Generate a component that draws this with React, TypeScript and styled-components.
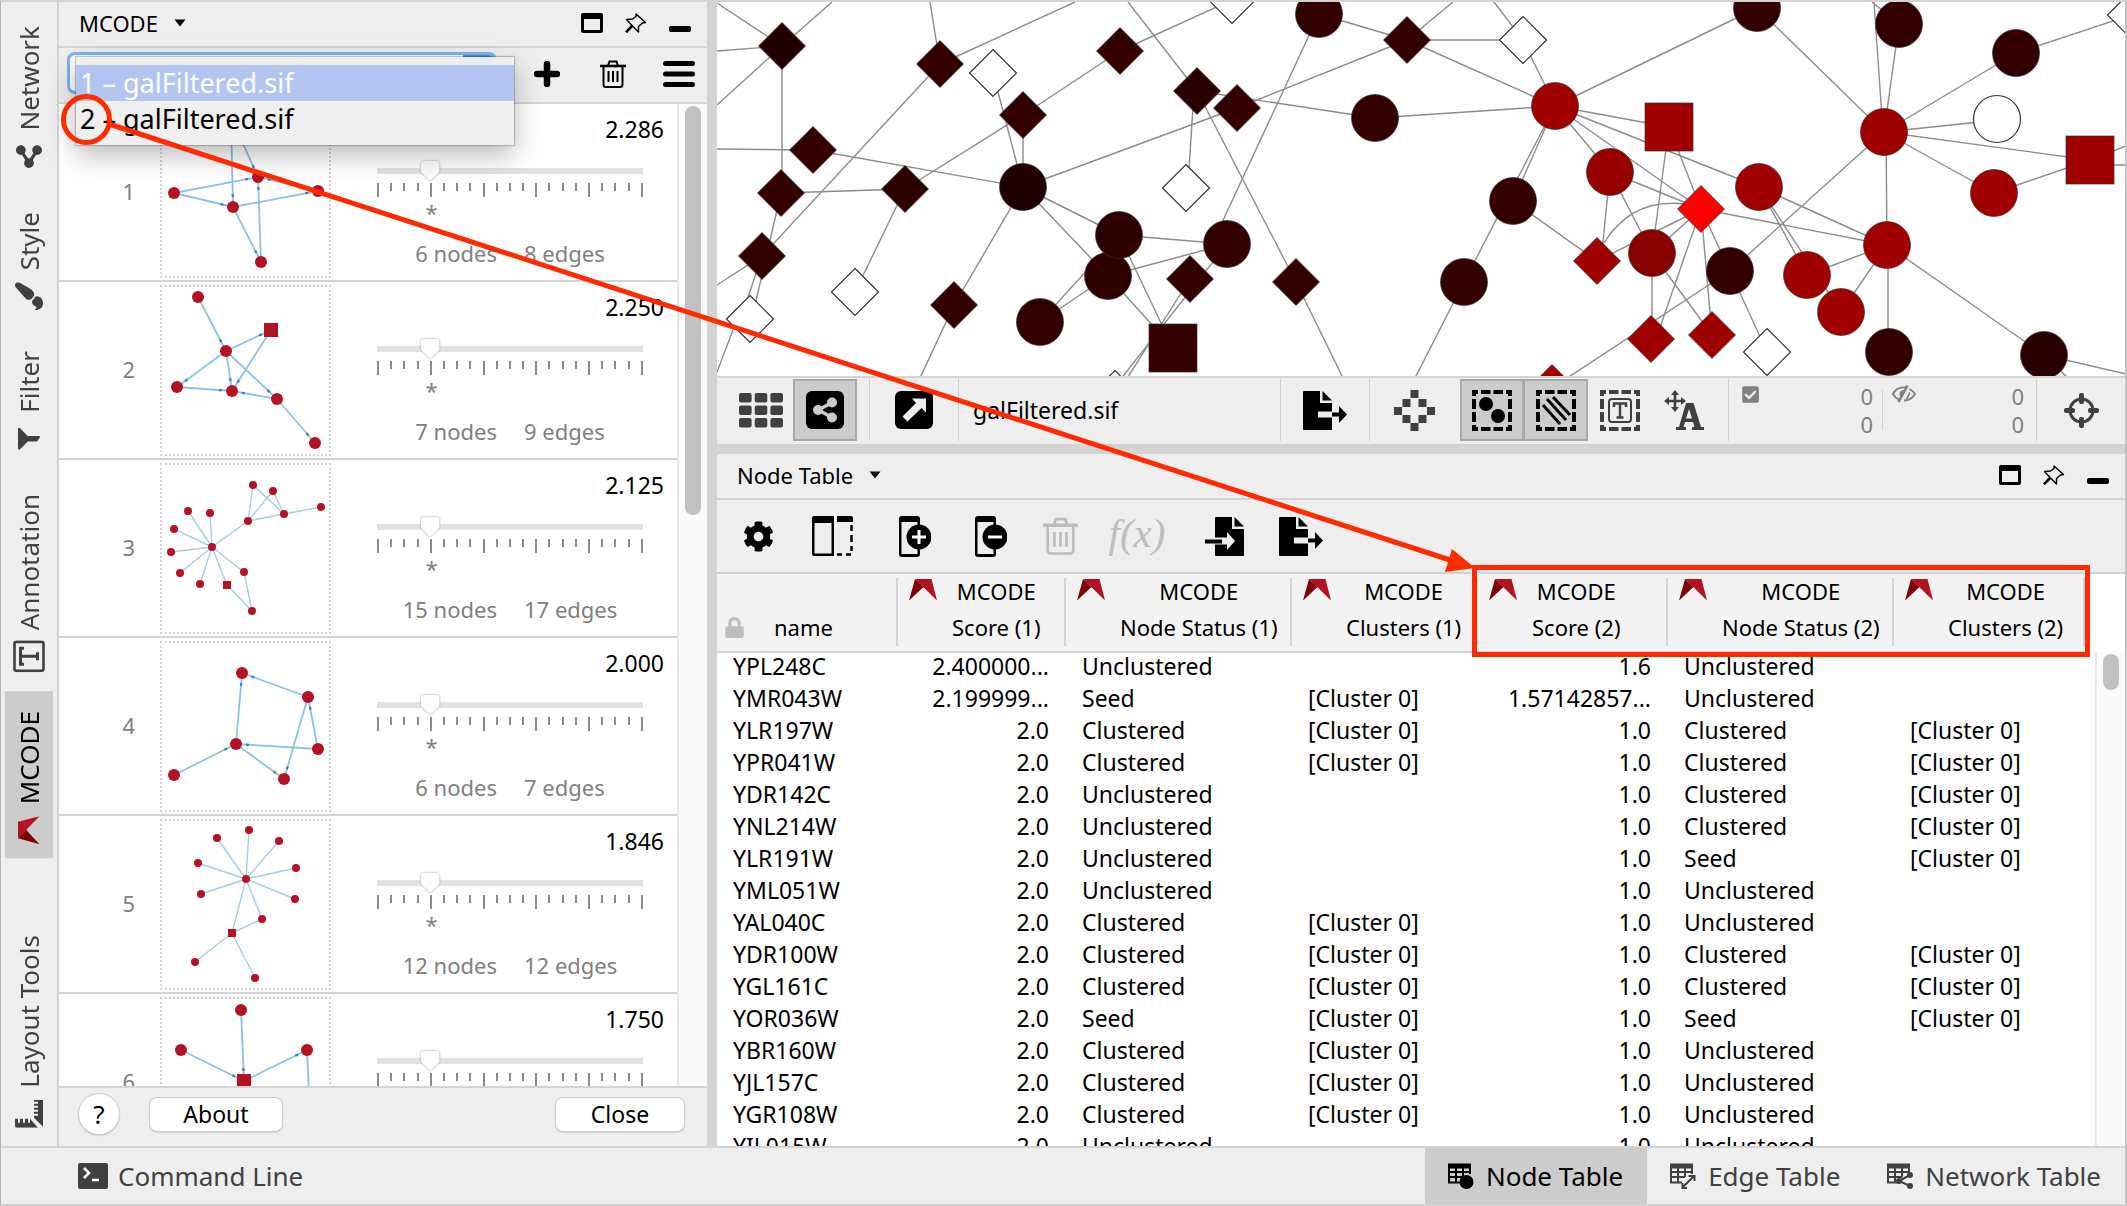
import React, { useState } from "react";
import styled, { createGlobalStyle, css } from "styled-components";
import { FaFilter, FaPaintBrush, FaCog, FaLock, FaCheckSquare, FaShareAlt } from "react-icons/fa";

const color = {
  panel: "#eeeeee",
  line: "#d3d3d3",
  pressed: "#cccccc",
  pressedLine: "#a9a9a9",
  dim: "#808080",
  icon: "#404040",
  crimson: "#b31225",
  darkCrimson: "#7d0006",
  marker: "#ff2a00",
};

const GlobalStyle = createGlobalStyle`
  * { box-sizing: border-box; }
  body {
    margin: 0;
    background: ${color.panel};
    font-family: "Noto Sans", "Open Sans", sans-serif;
    font-size: 22px;
    color: #000;
  }
  button, select, input { font: inherit; color: inherit; margin: 0; }
  svg { display: block; flex: none; }
`;

/* ---------- frame ---------- */

const Window = styled.div`
  position: relative;
  display: flex;
  flex-direction: column;
  height: 100vh;
  overflow: hidden;
  border: solid ${color.line};
  border-width: 2px 2px 2px 1px;
  border-left-color: #b4b4b4;
  border-right-color: #c4c4c4;
`;

const Workspace = styled.div`
  flex: 1;
  min-height: 0;
  display: flex;
`;

const Rail = styled.nav`
  flex: none;
  width: 58px;
  display: flex;
  flex-direction: column;
  align-items: flex-start;
  gap: 7px;
  padding: 4px 0 4px 4px;
  border-right: 2px solid ${color.line};
`;

const RailTab = styled.button<{ $active?: boolean; $last?: boolean }>`
  display: flex;
  align-items: center;
  gap: 10px;
  width: 48px;
  padding-block: 0;
  padding-inline: 12px 20px;
  border: 0;
  writing-mode: vertical-rl;
  transform: rotate(180deg);
  background: ${(p) => (p.$active ? color.pressed : "transparent")};
  color: ${(p) => (p.$active ? "#000" : color.icon)};
  font-size: 26px;
  line-height: 48px;
  margin-top: ${(p) => (p.$last ? "auto" : "0")};
`;

const RailIcon = styled.span`
  display: flex;
  align-items: center;
  justify-content: center;
  width: 32px;
  height: 32px;
  transform: rotate(90deg);
  line-height: 1;
`;

const SidePanel = styled.section`
  flex: none;
  width: 648px;
  display: flex;
  flex-direction: column;
`;

const Gutter = styled.div<{ $horizontal?: boolean }>`
  flex: none;
  background: ${color.line};
  ${(p) =>
    p.$horizontal
      ? css`
          height: 10px;
        `
      : css`
          width: 10px;
        `}
`;

const Main = styled.main`
  flex: 1;
  min-width: 0;
  display: flex;
  flex-direction: column;
`;

const TitleBar = styled.header`
  flex: none;
  display: flex;
  align-items: center;
  gap: 22px;
  height: 46px;
  padding: 0 16px 2px 20px;
  border-bottom: 2px solid ${color.line};
`;

const TitleButton = styled.button`
  display: flex;
  align-items: center;
  gap: 16px;
  margin-right: auto;
  padding: 0;
  border: 0;
  background: none;
  line-height: 32px;
`;

const GlyphButton = styled.button`
  display: flex;
  align-items: center;
  justify-content: center;
  width: 22px;
  height: 32px;
  padding: 0;
  border: 0;
  background: none;
`;

/* ---------- MCODE panel ---------- */

const SetBar = styled.div`
  position: relative;
  z-index: 2;
  flex: none;
  display: flex;
  align-items: center;
  gap: 34px;
  height: 56px;
  padding: 0 12px 2px 8px;
  border-bottom: 2px solid ${color.line};
`;

const Combo = styled.label`
  flex: 1;
  display: flex;
  height: 42px;
  margin-bottom: 2px;
  border: 3px solid #7fb2ec;
  border-radius: 8px;
  background: #fff;
  overflow: hidden;
`;

const ComboSelect = styled.select`
  flex: 1;
  appearance: none;
  border: 0;
  padding: 0 0 0 16px;
  background: transparent;
  font-size: 27px;
  outline: none;
`;

const ComboCap = styled.span`
  display: flex;
  align-items: center;
  justify-content: center;
  width: 34px;
  margin: -3px;
  background: #4f8fe9;
`;

const Popup = styled.ul`
  position: absolute;
  left: 17px;
  top: 9px;
  width: 438px;
  margin: 0;
  padding: 8px 0;
  list-style: none;
  background: rgba(238, 238, 238, 0.97);
  box-shadow: 0 0 1px 1px rgba(0, 0, 0, 0.2), 0 10px 26px rgba(0, 0, 0, 0.28);
`;

const PopupItem = styled.li<{ $selected?: boolean }>`
  padding-left: 4px;
  font-size: 27px;
  line-height: 36px;
  background: ${(p) => (p.$selected ? "rgba(178, 194, 241, 0.97)" : "transparent")};
  color: ${(p) => (p.$selected ? "#fff" : "#000")};
`;

const SetButton = styled(GlyphButton)`
  width: 32px;
`;

const ListArea = styled.div`
  flex: 1;
  min-height: 0;
  display: flex;
  background: #fff;
  border-bottom: 2px solid ${color.line};
`;

const ClusterList = styled.ol`
  flex: 1;
  margin: 0;
  padding: 0;
  overflow: hidden;
  list-style: none;
`;

const ScrollTrack = styled.div<{ $inset: number }>`
  flex: none;
  width: 30px;
  padding: ${(p) => p.$inset}px 0 0 6px;
  background: #fafafa;
  border-left: 2px solid #e8e8e8;
`;

const ScrollThumb = styled.div<{ $length: string }>`
  width: 16px;
  height: ${(p) => p.$length};
  border-radius: 8px;
  background: #c1c1c1;
`;

const ClusterRow = styled.li`
  display: grid;
  grid-template-columns: 101px 171px 1fr;
  height: 178px;
  border-bottom: 2px solid ${color.line};
`;

const Rank = styled.span`
  padding-right: 25px;
  text-align: right;
  line-height: 174px;
  color: ${color.dim};
`;

const Thumb = styled.div`
  width: 171px;
  height: 171px;
  margin-top: 3px;
  border: 2px dotted #d4d4d4;
`;

const Detail = styled.div`
  display: flex;
  flex-direction: column;
  padding: 9px 34px 0 46px;
`;

const Score = styled.div`
  margin-right: -21px;
  text-align: right;
  font-size: 23px;
  line-height: 32px;
`;

const SliderTrack = styled.div`
  display: flex;
  height: 20px;
  margin-top: 16px;
  background: linear-gradient(#e2e2e2, #e2e2e2) 0 7px / 100% 6px no-repeat;
`;

const Slider = styled.input`
  appearance: none;
  flex: 1;
  height: 20px;
  margin: 0 -10px;
  background: transparent;
  filter: drop-shadow(0 0 1px #999);
  &::-webkit-slider-thumb {
    appearance: none;
    width: 20px;
    height: 20px;
    background: #fdfdfd;
    clip-path: polygon(12% 0, 88% 0, 96% 8%, 96% 55%, 52% 98%, 48% 98%, 4% 55%, 4% 8%);
  }
`;

const Ticks = styled.div`
  display: flex;
  justify-content: space-between;
  height: 14px;
  margin-top: 2px;
`;

const Tick = styled.i<{ $major: boolean }>`
  width: 2px;
  height: ${(p) => (p.$major ? 14 : 8)}px;
  background: #8a8a8a;
`;

const DefaultMark = styled.div`
  width: 41%;
  margin-top: 3px;
  text-align: center;
  line-height: 24px;
  color: ${color.dim};
`;

const Counts = styled.div`
  display: flex;
  justify-content: center;
  gap: 27px;
  margin-top: 14px;
  line-height: 30px;
  color: ${color.dim};
`;

const PanelFooter = styled.footer`
  flex: none;
  display: flex;
  align-items: center;
  height: 58px;
  padding: 0 23px 6px 20px;
`;

const raised = css`
  border: 0;
  background: #fff;
  box-shadow: 0 0 0 1px #cdcdcd, 0 1px 2px rgba(0, 0, 0, 0.4);
`;

const HelpButton = styled.button`
  ${raised}
  width: 40px;
  height: 40px;
  margin-right: 31px;
  padding: 0;
  border-radius: 50%;
  font-size: 26px;
  line-height: 40px;
`;

const PushButton = styled.button<{ $end?: boolean }>`
  ${raised}
  width: ${(p) => (p.$end ? 128 : 132)}px;
  height: 33px;
  margin-left: ${(p) => (p.$end ? "auto" : "0")};
  padding: 0;
  border-radius: 7px;
  font-size: 23px;
  line-height: 32px;
`;

/* ---------- network view ---------- */

const Canvas = styled.div`
  flex: none;
  height: 376px;
  background: #fff;
  border-bottom: 2px solid ${color.line};
  overflow: hidden;
`;

const ViewBar = styled.div`
  flex: none;
  display: flex;
  align-items: center;
  height: 66px;
  padding: 0 12px 2px 12px;
`;

const ToolButton = styled.button<{ $active?: boolean; $joined?: boolean; $spaced?: boolean }>`
  display: flex;
  align-items: center;
  justify-content: center;
  flex: none;
  width: 64px;
  height: 62px;
  padding: 0;
  margin-left: ${(p) => (p.$spaced ? "14px" : "0")};
  border: 2px solid ${(p) => (p.$active ? color.pressedLine : "transparent")};
  border-left-width: ${(p) => (p.$joined ? 1 : 2)}px;
  background: ${(p) => (p.$active ? color.pressed : "transparent")};
`;

const Separator = styled.span`
  flex: none;
  width: 1px;
  height: 62px;
  margin: 0 12px;
  background: #cfcfcf;
`;

const ViewName = styled.span`
  flex: 1;
  padding-left: 2px;
  font-size: 23px;
`;

const Tally = styled.div`
  display: flex;
  justify-content: space-between;
  width: 132px;
  color: ${color.dim};
  line-height: 28px;
  svg {
    margin-top: 3px;
  }
`;

const TallyNumbers = styled.div`
  display: flex;
  flex-direction: column;
`;

const TallyRule = styled.span`
  width: 1px;
  height: 40px;
  margin: 0 9px;
  background: #cfcfcf;
`;

/* ---------- node table ---------- */

const TableBar = styled.div`
  flex: none;
  display: flex;
  align-items: center;
  height: 74px;
  padding-left: 8px;
  border-bottom: 2px solid ${color.line};
`;

const TableTool = styled.button<{ $width: number }>`
  display: flex;
  align-items: center;
  justify-content: center;
  width: ${(p) => p.$width}px;
  height: 60px;
  padding: 0;
  border: 0;
  background: none;
`;

const Formula = styled.span`
  padding-bottom: 6px;
  font-family: "Liberation Serif", serif;
  font-style: italic;
  font-size: 41px;
  line-height: 44px;
  color: #bdbdbd;
`;

const TableArea = styled.div`
  flex: 1;
  min-height: 0;
  display: flex;
  background: #fff;
`;

const TableClip = styled.div`
  flex: 1;
  overflow: hidden;
`;

const ScrollColumn = styled.div`
  display: flex;
  padding-top: 78px;
`;

const Grid = styled.table`
  table-layout: fixed;
  width: 1368px;
  border-collapse: collapse;
`;

const HeadCell = styled.th`
  height: 78px;
  padding: 0;
  border-bottom: 2px solid ${color.line};
  background: linear-gradient(${color.line}, ${color.line}) right 0 top 4px / 2px 68px no-repeat #f3f3f3;
  text-align: left;
  vertical-align: top;
  font-weight: 400;
  line-height: 36px;
`;

const HeadInner = styled.div<{ $locked?: boolean }>`
  display: flex;
  align-items: ${(p) => (p.$locked ? "flex-end" : "flex-start")};
  gap: ${(p) => (p.$locked ? 29 : 15)}px;
  height: 71px;
  padding-left: ${(p) => (p.$locked ? 7 : 11)}px;
  color: ${(p) => (p.$locked ? "#bdbdbd" : "inherit")};
  white-space: nowrap;
  svg {
    margin: ${(p) => (p.$locked ? "0 0 7px" : "5px 0 0")};
  }
`;

const HeadText = styled.span`
  margin-top: -1px;
  color: #000;
  text-align: center;
  white-space: pre-line;
`;

const Cell = styled.td<{ $number?: boolean }>`
  height: 32px;
  padding: 0 17px 6px 16px;
  white-space: nowrap;
  font-size: 23px;
  line-height: 26px;
  text-align: ${(p) => (p.$number ? "right" : "left")};
`;

/* ---------- bottom bar ---------- */

const BottomBar = styled.footer`
  flex: none;
  display: flex;
  height: 58px;
  border-top: 2px solid ${color.line};
`;

const BottomTab = styled.button<{ $active?: boolean; $first?: boolean }>`
  display: flex;
  align-items: center;
  gap: ${(p) => (p.$first ? 10 : 12)}px;
  margin-left: ${(p) => (p.$first ? "54px" : "0")};
  margin-right: ${(p) => (p.$first ? "auto" : "0")};
  padding: 0 24px 0 23px;
  border: 0;
  background: ${(p) => (p.$active ? color.pressed : "transparent")};
  color: ${(p) => (p.$active ? "#000" : color.icon)};
  font-size: 26px;
  line-height: 36px;
`;

const Callout = styled.svg`
  position: absolute;
  left: -1px;
  top: -2px;
  z-index: 3;
  pointer-events: none;
`;

/* ---------- icons ---------- */

const McodeLogo = () => (
  <svg width="28" height="22" viewBox="0 0 28 22">
    <path d="M6 0L14.500 8L0 21.500Z" fill={color.darkCrimson} />
    <path d="M6 0H22.500L28 21.500Z" fill={color.crimson} />
  </svg>
);

const CaretIcon = () => (
  <svg width="12" height="8" viewBox="0 0 12 8">
    <path d="M0.500 0.500H11.500L6 7.500Z" />
  </svg>
);

const FloatIcon = () => (
  <svg width="22" height="20" viewBox="0 0 22 20">
    <path fillRule="evenodd" d="M2 0H20Q22 0 22 2V18Q22 20 20 20H2Q0 20 0 18V2Q0 0 2 0ZM3 6V17H19V6Z" />
  </svg>
);

const PinIcon = () => (
  <svg width="22" height="20" viewBox="0 0 22 20" fill="none" stroke="#000">
    <path d="M11 1L20.500 9.500L17.500 10L13.500 13.500V19L7.500 13L1.500 6.500L7.500 6L11 3.500Z" strokeWidth="1.400" strokeLinejoin="round" />
    <path d="M7 13L1 19.300" strokeWidth="2.600" />
  </svg>
);

const MinimizeIcon = () => (
  <svg width="22" height="20" viewBox="0 0 22 20">
    <rect y="13" width="22" height="6" rx="2" />
  </svg>
);

const TrashIcon = ({ width, height, stroke = "#000" }: { width: number; height: number; stroke?: string }) => (
  <svg width={width} height={height} viewBox="0 0 26 28" fill="none" stroke={stroke} strokeWidth="2">
    <path d="M0 6H26" strokeWidth="2.600" />
    <path d="M8 6L9.500 1.500H16.500L18 6M3.500 6V24.500Q3.500 27 6 27H20Q22.500 27 22.500 24.500V6M8.500 11V22M13 11V22M17.500 11V22" />
  </svg>
);

const HiddenIcon = () => (
  <svg width="24" height="18" viewBox="0 0 24 18" fill="none" stroke={color.dim} strokeWidth="1.800">
    <path d="M14 2.500Q4.500 1.500 1 9Q3 13 7 14.700M17.500 4Q21 6 23 9Q19 15.500 12 15.500" />
    <path d="M13 5Q8 4.500 7.500 9Q7.500 11 9 12Z" fill={color.dim} stroke="none" />
    <path d="M15.500 0.500L6.500 17" strokeWidth="2.600" />
    <path d="M18 7.500L14.500 14" strokeWidth="1.600" />
  </svg>
);

const GridIcon = () => (
  <svg width="44" height="35" viewBox="0 0 44 35" fill={color.icon}>
    {[0, 12.5, 25].map((y) =>
      [0, 15.7, 31.4].map((x) => <rect key={`${x}-${y}`} x={x} y={y} width="12.600" height="9.500" rx="2" />)
    )}
  </svg>
);

const ShareSquareIcon = () => (
  <svg width="38" height="38" viewBox="0 0 38 38">
    <rect width="38" height="38" rx="6" />
    <g fill="#ccc" stroke="none">
      <path d="M26 11.500L12.500 19L26 26.500" fill="none" stroke="#ccc" strokeWidth="3.500" />
      <circle cx="26" cy="11.500" r="5" />
      <circle cx="12" cy="19" r="5" />
      <circle cx="26" cy="26.500" r="5" />
    </g>
  </svg>
);

const DetachIcon = () => (
  <svg width="38" height="38" viewBox="0 0 38 38">
    <rect width="38" height="38" rx="6" />
    <path d="M17 7.500H31V21.500L26.500 17L12.500 30.500L7.500 25.500L21 12Z" fill="#eee" />
  </svg>
);

const PageExportIcon = () => (
  <svg width="44" height="39" viewBox="0 0 44 39">
    <path d="M0 1Q0 0 1 0H17V12H29V39H1Q0 39 0 38Z" />
    <path d="M19.500 0L29 9.500H19.500Z" />
    <path d="M15 20.500H29V26.500H15Z" fill="#eee" />
    <path d="M29 21.500H36V15L44 23.500L36 32V25.500H29Z" />
  </svg>
);

const PageImportIcon = () => (
  <svg width="39" height="39" viewBox="0 0 39 39">
    <path d="M10 1Q10 0 11 0H27V12H39V39H11Q10 39 10 38Z" />
    <path d="M29.500 0L39 9.500H29.500Z" />
    <path d="M9 20.500H22V15L30 24L22 33V27.500H9Z" fill="#eee" />
    <path d="M0 22.500H17V26.500H0Z" />
  </svg>
);

const FirstNeighborsIcon = () => (
  <svg width="41" height="41" viewBox="0 0 41 41" fill={color.icon}>
    {[
      [16.5, 0], [8.5, 9], [24.5, 9], [0, 17], [33, 17], [8.5, 25], [24.5, 25], [16.5, 33],
    ].map(([x, y]) => (
      <rect key={`${x}-${y}`} x={x} y={y} width="8" height="8" />
    ))}
  </svg>
);

const DashFrame = ({ stroke }: { stroke: string }) => (
  <g fill="none" stroke={stroke} strokeWidth="4">
    <path d="M0 2H6M9 2H18.500M21.500 2H31M34 2H40M0 39H6M9 39H18.500M21.500 39H31M34 39H40" />
    <path d="M2 0V6M2 9V19M2 22V32M2 35V41M38 0V6M38 9V19M38 22V32M38 35V41" />
  </g>
);

const NodeSelectIcon = () => (
  <svg width="40" height="41" viewBox="0 0 40 41">
    <DashFrame stroke="#000" />
    <circle cx="14" cy="14" r="7" />
    <circle cx="26" cy="26" r="7" />
  </svg>
);

const EdgeSelectIcon = () => (
  <svg width="40" height="41" viewBox="0 0 40 41">
    <DashFrame stroke="#000" />
    <path d="M17 7L34 25M11 9L30 30M7 15L24 34" stroke="#000" strokeWidth="3" />
  </svg>
);

const LabelSelectIcon = () => (
  <svg width="40" height="41" viewBox="0 0 40 41">
    <DashFrame stroke={color.icon} />
    <rect x="9" y="9" width="22" height="23" rx="3" fill="none" stroke={color.icon} strokeWidth="2" />
    <path d="M14 17V13.500H26V17M20 13.500V27M16.500 27.500H23.500" fill="none" stroke={color.icon} strokeWidth="2.500" />
  </svg>
);

const MoveLabelIcon = () => (
  <svg width="40" height="41" viewBox="0 0 40 41" fill={color.icon}>
    <path d="M11 0L15 5H12.300V9.700H17V7L22 11L17 15V12.300H12.300V17H15L11 22L7 17H9.700V12.300H5V15L0 11L5 7V9.700H9.700V5H7Z" />
    <path d="M22 13H29.500L37 37H40V40H28V37H30.500L29 32H21L19.500 37H22V40H12V37H15ZM25 19L22 28.500H28Z" fillRule="evenodd" />
  </svg>
);

const LocateIcon = () => (
  <svg width="35" height="35" viewBox="0 0 35 35" fill={color.icon}>
    <circle cx="17.500" cy="17.500" r="11.500" fill="none" stroke={color.icon} strokeWidth="3" />
    <rect x="15" width="5" height="11" rx="2" />
    <rect x="15" y="24" width="5" height="11" rx="2" />
    <rect y="15" width="11" height="5" rx="2" />
    <rect x="24" y="15" width="11" height="5" rx="2" />
  </svg>
);

const ColumnsIcon = () => (
  <svg width="41" height="40" viewBox="0 0 41 40">
    <path fillRule="evenodd" d="M2 0H22V40H2Q0 40 0 38V2Q0 0 2 0ZM2.500 7V37.500H19.500V7Z" />
    <path d="M25 0H39Q41 0 41 2V6H25Z" />
    <path d="M39.500 9V15M39.500 19V26M39.500 30V35M25 38.500H30M34 38.500H39" stroke="#000" strokeWidth="2.500" />
  </svg>
);

const ColumnEditIcon = ({ add }: { add?: boolean }) => (
  <svg width="32" height="41" viewBox="0 0 32 41">
    <path fillRule="evenodd" d="M3 0H18Q21 0 21 3V38Q21 41 18 41H3Q0 41 0 38V3Q0 0 3 0ZM2.500 6V38H18.500V6Z" />
    <circle cx="20" cy="21" r="12.500" />
    <path d={add ? "M13 21H27M20 14V28" : "M13 21H27"} stroke="#fff" strokeWidth="3" />
  </svg>
);

const TextBoxIcon = () => (
  <svg width="32" height="32" viewBox="0 0 32 32" fill="none" stroke={color.icon}>
    <rect x="1.500" y="1.500" width="29" height="29" rx="2" strokeWidth="2.600" />
    <path d="M8 11V7.500H24V11M16 7.500V24M12 24.500H20" strokeWidth="3" />
  </svg>
);

const RulerIcon = () => (
  <svg width="28" height="28" viewBox="0 0 28 28" fill={color.icon}>
    <path d="M2 0H9V3H5V5H9V8H5V10H9V13H5V15H9L0 23V2Q0 0 2 0Z" />
    <path d="M10 19H12V23H14V19H16V23H18V19H20V23H22V19H24V23H26V19H28V28H1Z" />
  </svg>
);

const TerminalIcon = () => (
  <svg width="30" height="26" viewBox="0 0 30 26">
    <rect width="30" height="26" rx="2" fill={color.icon} />
    <path d="M6 5L11 10L6 15M14 17H21" fill="none" stroke="#fff" strokeWidth="2.500" />
  </svg>
);

const TableIcon = ({ kind }: { kind: "node" | "edge" | "network" }) => {
  const ink = kind === "node" ? "#000" : color.icon;
  return (
    <svg width="26" height="26" viewBox="0 0 26 26" fill="none" stroke={ink} strokeWidth="2">
      <path d="M0 3H23" strokeWidth="5" />
      <path d="M1 4V19.500H12M22 4V11M0 9H23M0 14H15M8 4V19M15 4V14" />
      {kind === "node" && <circle cx="18.500" cy="19" r="7" fill={ink} stroke="none" />}
      {kind === "edge" && <path d="M13 24L24 13M18.500 13H24.500V18M12.500 20V25H17" />}
      {kind === "network" && (
        <g fill={ink}>
          <path d="M23 12L12 18L23 23" fill="none" />
          <circle cx="23" cy="12" r="2" />
          <circle cx="12" cy="18" r="2" />
          <circle cx="23" cy="23" r="2" />
        </g>
      )}
    </svg>
  );
};

/* ---------- main network drawing ---------- */

type Shape = "c" | "d" | "s";
const DARK = "#330000";
const RED = "#a00000";
const WHITE = "#ffffff";

const networkNodes: [Shape, number, number, string][] = [
  ["d", 782, 46, "#220000"], ["d", 940, 64, DARK], ["d", 993, 73, WHITE], ["d", 1120, 51, DARK],
  ["d", 1197, 91, "#280000"], ["d", 1023, 115, DARK], ["d", 813, 150, DARK], ["d", 781, 193, DARK],
  ["d", 905, 189, "#2d0000"], ["c", 1023, 187, "#1e0000"], ["d", 1186, 188, WHITE],
  ["c", 1108, 276, "#2d0000"], ["c", 1119, 235, "#2d0000"], ["d", 762, 256, DARK],
  ["d", 855, 292, WHITE], ["d", 750, 319, WHITE], ["d", 954, 305, DARK], ["c", 1040, 322, DARK],
  ["s", 1173, 348, DARK], ["d", 1190, 279, DARK], ["d", 1115, 394, WHITE], ["d", 1232, 0, WHITE],
  ["c", 1319, 14, DARK], ["d", 1407, 40, DARK], ["d", 1523, 40, WHITE], ["d", 1237, 108, DARK],
  ["c", 1375, 118, DARK], ["c", 1555, 106, RED], ["s", 1669, 127, RED], ["c", 1610, 172, "#960000"],
  ["c", 1227, 244, DARK], ["d", 1296, 282, DARK], ["c", 1513, 201, DARK], ["c", 1464, 282, DARK],
  ["d", 1597, 261, RED], ["c", 1652, 253, "#880000"], ["d", 1651, 339, RED], ["d", 1552, 388, RED],
  ["c", 1757, 8, DARK], ["c", 1899, 24, DARK], ["c", 2016, 53, DARK], ["d", 2131, 15, WHITE],
  ["c", 1884, 132, RED], ["c", 1997, 119, WHITE], ["s", 2090, 160, RED], ["c", 1994, 193, RED],
  ["c", 1759, 187, RED], ["d", 1701, 209, "#ff0000"], ["c", 1887, 245, RED], ["c", 1730, 271, DARK],
  ["c", 1807, 275, RED], ["c", 1841, 312, RED], ["d", 1712, 335, RED], ["d", 1767, 352, WHITE],
  ["c", 1889, 352, DARK], ["c", 2044, 355, "#280000"],
];

const networkEdges: [number, number, number, number][] = [
  [717, 3, 782, 46], [782, 46, 832, 2], [717, 51, 782, 46], [717, 105, 782, 46], [782, 46, 782, 193],
  [717, 149, 813, 150], [813, 150, 1023, 187], [781, 193, 905, 189], [781, 193, 755, 305],
  [762, 256, 747, 300], [762, 256, 940, 64], [717, 285, 762, 256], [733, 330, 717, 372],
  [940, 64, 930, 2], [940, 64, 1075, 2], [993, 73, 1023, 187], [1120, 51, 1023, 115],
  [1120, 51, 1232, 0], [1023, 115, 905, 189], [1023, 115, 1023, 187], [1023, 187, 1237, 108],
  [1023, 187, 1119, 235], [1023, 187, 1108, 276], [1023, 187, 954, 305], [954, 305, 920, 378],
  [905, 189, 855, 292], [1197, 91, 1128, 2], [1194, 91, 1189, 170], [1197, 91, 1296, 282],
  [1119, 235, 1227, 244], [1108, 276, 1227, 244], [1119, 235, 1040, 322], [1108, 276, 1040, 322],
  [1119, 235, 1173, 348], [1108, 276, 1173, 348], [1227, 244, 1120, 380], [1190, 279, 1126, 380],
  [1319, 14, 1407, 40], [1407, 40, 1555, 106], [1319, 14, 1212, 244], [1407, 40, 1453, 2],
  [1407, 40, 1523, 40], [1407, 40, 1237, 108], [1197, 91, 1375, 118], [1375, 118, 1555, 106],
  [1523, 40, 1494, 2], [1523, 40, 1555, 106], [1555, 106, 1757, 8], [1555, 106, 1669, 127],
  [1555, 106, 1759, 187], [1555, 106, 1701, 209], [1555, 106, 1610, 172], [1610, 172, 1701, 209],
  [1555, 106, 1513, 201], [1555, 106, 1464, 282], [1513, 201, 1597, 261], [1464, 282, 1414, 380],
  [1296, 282, 1343, 378], [1610, 172, 1601, 261], [1610, 172, 1652, 253], [1669, 127, 1652, 253],
  [1669, 127, 1701, 209], [1597, 261, 1701, 209], [1652, 253, 1701, 209], [1652, 253, 1652, 339],
  [1652, 253, 1712, 335], [1701, 209, 1656, 339], [1701, 209, 1712, 335], [1701, 209, 1730, 271],
  [1701, 209, 1887, 245], [1730, 271, 1552, 388], [1730, 271, 1884, 132], [1730, 271, 1767, 352],
  [1757, 8, 1884, 132], [1884, 132, 1899, 24], [1883, 132, 1874, 2], [1899, 24, 1872, 2],
  [1884, 132, 2016, 53], [1884, 132, 1980, 122], [1884, 132, 2090, 160], [1884, 132, 1994, 193],
  [1886, 132, 1887, 245], [2016, 53, 2131, 15], [1994, 193, 2090, 160], [2090, 160, 2126, 146],
  [2090, 165, 2126, 165], [1759, 187, 1887, 245], [1759, 187, 1807, 275], [1759, 187, 1841, 312],
  [1887, 245, 1807, 275], [1887, 245, 1841, 312], [1888, 245, 1888, 352], [1887, 245, 2044, 355],
  [2044, 355, 2126, 374], [2044, 355, 2068, 378],
];

const NetworkView = () => (
  <svg width="100%" height="374" viewBox="717 2 1408 374" preserveAspectRatio="xMidYMid slice">
    <g stroke="#8c8c8c" strokeWidth="1.400" fill="none">
      {networkEdges.map(([x1, y1, x2, y2], i) => (
        <line key={i} x1={x1} y1={y1} x2={x2} y2={y2} />
      ))}
      <path d="M1604 243Q1632 198 1684 204" />
    </g>
    {networkNodes.map(([shape, x, y, fill], i) => {
      const paint = { fill, stroke: "#333", strokeWidth: fill === WHITE ? 1.2 : 0.7 };
      if (shape === "c") return <circle key={i} cx={x} cy={y} r="23.500" {...paint} />;
      if (shape === "s") return <rect key={i} x={x - 24} y={y - 24} width="48" height="48" {...paint} />;
      return <path key={i} d={`M${x} ${y - 23.5}l23.500 23.500l-23.500 23.500l-23.500 -23.500z`} {...paint} />;
    })}
  </svg>
);

/* ---------- clusters ---------- */

interface Cluster {
  score: string;
  nodes: number;
  edges: number;
  radius: number;
  points: [number, number][];
  square?: number;
  links: [number, number][];
}

const clusters: Cluster[] = [
  {
    score: "2.286", nodes: 6, edges: 8, radius: 6,
    points: [[13, 86], [97, 70], [157, 84], [72, 100], [100, 155], [70, 10]],
    links: [[0, 1], [0, 3], [3, 2], [3, 4], [4, 1], [2, 1], [5, 3], [5, 1]],
  },
  {
    score: "2.250", nodes: 7, edges: 9, radius: 6, square: 1,
    points: [[37, 12], [110, 45], [65, 66], [16, 102], [71, 106], [116, 114], [154, 158]],
    links: [[0, 2], [2, 1], [2, 3], [2, 4], [2, 5], [3, 4], [1, 4], [5, 4], [5, 6]],
  },
  {
    score: "2.125", nodes: 15, edges: 17, radius: 4, square: 12,
    points: [[92, 22], [112, 28], [160, 44], [123, 51], [87, 58], [27, 48], [49, 50], [13, 66], [51, 84],
      [10, 89], [19, 110], [39, 121], [66, 122], [83, 109], [91, 148]],
    links: [[8, 4], [8, 5], [8, 6], [8, 7], [8, 9], [8, 10], [8, 11], [8, 12], [8, 13], [4, 0], [4, 1],
      [4, 3], [0, 3], [1, 3], [3, 2], [12, 14], [13, 14]],
  },
  {
    score: "2.000", nodes: 6, edges: 7, radius: 6,
    points: [[81, 32], [147, 56], [75, 103], [157, 108], [123, 138], [13, 134]],
    links: [[1, 0], [2, 0], [3, 2], [2, 4], [5, 2], [1, 4], [3, 1]],
  },
  {
    score: "1.846", nodes: 12, edges: 12, radius: 4, square: 9,
    points: [[88, 11], [56, 19], [118, 22], [37, 44], [135, 49], [85, 60], [40, 75], [134, 80], [101, 100],
      [71, 114], [34, 143], [94, 159]],
    links: [[5, 0], [5, 1], [5, 2], [3, 5], [4, 5], [6, 5], [7, 5], [8, 5], [9, 5], [9, 8], [10, 9], [9, 11]],
  },
  {
    score: "1.750", nodes: 5, edges: 6, radius: 6, square: 3,
    points: [[80, 13], [20, 53], [146, 53], [83, 84], [150, 140]],
    links: [[0, 3], [1, 3], [3, 2], [2, 4], [3, 4]],
  },
];

const ClusterDrawing = ({ cluster }: { cluster: Cluster }) => {
  const large = cluster.radius > 5;
  const half = cluster.radius + (large ? 1 : 0);
  return (
    <svg width="167" height="167" viewBox="1 2 167 167">
      {cluster.links.map(([a, b], i) => {
        const [x1, y1] = cluster.points[a];
        const [x2, y2] = cluster.points[b];
        const length = Math.hypot(x2 - x1, y2 - y1);
        const ux = (x2 - x1) / length;
        const uy = (y2 - y1) / length;
        const tip = cluster.radius + 4;
        const tail = tip + 3;
        return (
          <g key={i}>
            <line x1={x1} y1={y1} x2={x2} y2={y2} stroke={large ? "#8fc1e0" : "#a6cde6"} strokeWidth={large ? 1.8 : 1.4} />
            {large && (
              <line
                x1={x2 - ux * tail} y1={y2 - uy * tail} x2={x2 - ux * tip} y2={y2 - uy * tip}
                stroke="#3b7cbf" strokeWidth="2.200"
              />
            )}
          </g>
        );
      })}
      {cluster.points.map(([x, y], i) =>
        i === cluster.square ? (
          <rect key={i} x={x - half} y={y - half} width={half * 2} height={half * 2} fill={color.crimson} />
        ) : (
          <circle key={i} cx={x} cy={y} r={cluster.radius} fill={color.crimson} />
        )
      )}
    </svg>
  );
};

const ClusterItem = ({ cluster, rank }: { cluster: Cluster; rank: number }) => {
  const [value, setValue] = useState(4);
  return (
    <ClusterRow>
      <Rank>{rank}</Rank>
      <Thumb>
        <ClusterDrawing cluster={cluster} />
      </Thumb>
      <Detail>
        <Score>{cluster.score}</Score>
        <SliderTrack>
          <Slider
            type="range" min={0} max={20} value={value}
            aria-label={`Size threshold of cluster ${rank}`}
            onChange={(e) => setValue(Number(e.target.value))}
          />
        </SliderTrack>
        <Ticks>
          {Array.from({ length: 21 }, (_, i) => (
            <Tick key={i} $major={i % 4 === 0} />
          ))}
        </Ticks>
        <DefaultMark>*</DefaultMark>
        <Counts>
          <span>{cluster.nodes} nodes</span>
          <span>{cluster.edges} edges</span>
        </Counts>
      </Detail>
    </ClusterRow>
  );
};

/* ---------- table data ---------- */

const columns = [
  { title: "name", width: 181 },
  { title: "MCODE\nScore (1)", width: 168 },
  { title: "MCODE\nNode Status (1)", width: 226 },
  { title: "MCODE\nClusters (1)", width: 186 },
  { title: "MCODE\nScore (2)", width: 190 },
  { title: "MCODE\nNode Status (2)", width: 226 },
  { title: "MCODE\nClusters (2)", width: 191 },
];

const U = "Unclustered";
const C = "Clustered";
const S = "Seed";
const K = "[Cluster 0]";

const rows = [
  ["YPL248C", "2.400000...", U, "", "1.6", U, ""],
  ["YMR043W", "2.199999...", S, K, "1.57142857...", U, ""],
  ["YLR197W", "2.0", C, K, "1.0", C, K],
  ["YPR041W", "2.0", C, K, "1.0", C, K],
  ["YDR142C", "2.0", U, "", "1.0", C, K],
  ["YNL214W", "2.0", U, "", "1.0", C, K],
  ["YLR191W", "2.0", U, "", "1.0", S, K],
  ["YML051W", "2.0", U, "", "1.0", U, ""],
  ["YAL040C", "2.0", C, K, "1.0", U, ""],
  ["YDR100W", "2.0", C, K, "1.0", C, K],
  ["YGL161C", "2.0", C, K, "1.0", C, K],
  ["YOR036W", "2.0", S, K, "1.0", S, K],
  ["YBR160W", "2.0", C, K, "1.0", U, ""],
  ["YJL157C", "2.0", C, K, "1.0", U, ""],
  ["YGR108W", "2.0", C, K, "1.0", U, ""],
  ["YIL015W", "2.0", U, "", "1.0", U, ""],
];

const railTabs = [
  { label: "Network", icon: <FaShareAlt size={26} /> },
  { label: "Style", icon: <FaPaintBrush size={28} /> },
  { label: "Filter", icon: <FaFilter size={22} /> },
  { label: "Annotation", icon: <TextBoxIcon /> },
  { label: "MCODE", icon: <McodeLogo />, active: true },
  { label: "Layout Tools", icon: <RulerIcon />, last: true },
];

const PanelTitle = ({ title }: { title: string }) => (
  <TitleBar>
    <TitleButton>
      {title}
      <CaretIcon />
    </TitleButton>
    <GlyphButton aria-label={`Float ${title}`}><FloatIcon /></GlyphButton>
    <GlyphButton aria-label={`Unpin ${title}`}><PinIcon /></GlyphButton>
    <GlyphButton aria-label={`Minimize ${title}`}><MinimizeIcon /></GlyphButton>
  </TitleBar>
);

export default function App() {
  const [resultSet, setResultSet] = useState("2");
  return (
    <>
      <GlobalStyle />
      <Window>
        <Workspace>
          <Rail>
            {railTabs.map((tab) => (
              <RailTab key={tab.label} $active={tab.active} $last={tab.last}>
                <RailIcon>{tab.icon}</RailIcon>
                {tab.label}
              </RailTab>
            ))}
          </Rail>

          <SidePanel>
            <PanelTitle title="MCODE" />
            <SetBar>
              <Combo>
                <ComboSelect
                  aria-label="Result set" value={resultSet}
                  onChange={(e) => setResultSet(e.target.value)}
                >
                  <option value="1">1 – galFiltered.sif</option>
                  <option value="2">2 – galFiltered.sif</option>
                </ComboSelect>
                <ComboCap>
                  <svg width="14" height="22" viewBox="0 0 14 22" fill="none" stroke="#fff" strokeWidth="2">
                    <path d="M2 8L7 2L12 8M2 14L7 20L12 14" />
                  </svg>
                </ComboCap>
              </Combo>
              <SetButton aria-label="New clustering">
                <svg width="26" height="26" viewBox="0 0 26 26">
                  <path d="M13 3V23M3 13H23" stroke="#000" strokeWidth="6.500" strokeLinecap="round" />
                </svg>
              </SetButton>
              <SetButton aria-label="Discard result"><TrashIcon width={26} height={28} /></SetButton>
              <SetButton aria-label="Options">
                <svg width="32" height="28" viewBox="0 0 32 28">
                  <path d="M2.500 3.500H29.500M2.500 14H29.500M2.500 24.500H29.500" stroke="#000" strokeWidth="5" strokeLinecap="round" />
                </svg>
              </SetButton>
              <Popup role="listbox" aria-label="Result sets">
                <PopupItem role="option" aria-selected $selected>1 – galFiltered.sif</PopupItem>
                <PopupItem role="option" aria-selected={false}>2 – galFiltered.sif</PopupItem>
              </Popup>
            </SetBar>
            <ListArea>
              <ClusterList>
                {clusters.map((cluster, i) => (
                  <ClusterItem key={cluster.score} cluster={cluster} rank={i + 1} />
                ))}
              </ClusterList>
              <ScrollTrack $inset={2}>
                <ScrollThumb $length="409px" />
              </ScrollTrack>
            </ListArea>
            <PanelFooter>
              <HelpButton aria-label="Help">?</HelpButton>
              <PushButton>About</PushButton>
              <PushButton $end>Close</PushButton>
            </PanelFooter>
          </SidePanel>

          <Gutter />

          <Main>
            <Canvas><NetworkView /></Canvas>
            <ViewBar>
              <ToolButton aria-label="Grid view"><GridIcon /></ToolButton>
              <ToolButton aria-label="Network view" $active><ShareSquareIcon /></ToolButton>
              <Separator />
              <ToolButton aria-label="Detach view"><DetachIcon /></ToolButton>
              <Separator />
              <ViewName>galFiltered.sif</ViewName>
              <Separator />
              <ToolButton aria-label="Export image"><PageExportIcon /></ToolButton>
              <Separator />
              <ToolButton aria-label="First neighbors"><FirstNeighborsIcon /></ToolButton>
              <ToolButton aria-label="Select nodes" $active $spaced><NodeSelectIcon /></ToolButton>
              <ToolButton aria-label="Select edges" $active $joined><EdgeSelectIcon /></ToolButton>
              <ToolButton aria-label="Select annotations"><LabelSelectIcon /></ToolButton>
              <ToolButton aria-label="Move labels"><MoveLabelIcon /></ToolButton>
              <Separator />
              <Tally>
                <FaCheckSquare size={19} />
                <TallyNumbers><span>0</span><span>0</span></TallyNumbers>
              </Tally>
              <TallyRule />
              <Tally>
                <HiddenIcon />
                <TallyNumbers><span>0</span><span>0</span></TallyNumbers>
              </Tally>
              <Separator />
              <ToolButton aria-label="Navigator"><LocateIcon /></ToolButton>
            </ViewBar>
            <Gutter $horizontal />
            <PanelTitle title="Node Table" />
            <TableBar>
              <TableTool $width={66} aria-label="Table options"><FaCog size={31} /></TableTool>
              <TableTool $width={82} aria-label="Show columns"><ColumnsIcon /></TableTool>
              <TableTool $width={84} aria-label="Create column"><ColumnEditIcon add /></TableTool>
              <TableTool $width={68} aria-label="Delete columns"><ColumnEditIcon /></TableTool>
              <TableTool $width={70} aria-label="Delete table">
                <TrashIcon width={35} height={38} stroke="#bdbdbd" />
              </TableTool>
              <TableTool $width={84}><Formula>f(x)</Formula></TableTool>
              <TableTool $width={90} aria-label="Import table"><PageImportIcon /></TableTool>
              <TableTool $width={64} aria-label="Export table"><PageExportIcon /></TableTool>
            </TableBar>
            <TableArea>
              <TableClip>
                <Grid>
                  <colgroup>
                    {columns.map((column) => (
                      <col key={column.title} style={{ width: column.width }} />
                    ))}
                  </colgroup>
                  <thead>
                    <tr>
                      {columns.map((column, i) => (
                        <HeadCell key={column.title} scope="col">
                          <HeadInner $locked={i === 0}>
                            {i === 0 ? <FaLock size={21} /> : <McodeLogo />}
                            <HeadText>{column.title}</HeadText>
                          </HeadInner>
                        </HeadCell>
                      ))}
                    </tr>
                  </thead>
                  <tbody>
                    {rows.map((row) => (
                      <tr key={row[0]}>
                        {row.map((value, i) => (
                          <Cell key={i} $number={i === 1 || i === 4}>{value}</Cell>
                        ))}
                      </tr>
                    ))}
                  </tbody>
                </Grid>
              </TableClip>
              <ScrollColumn>
                <ScrollTrack $inset={2}>
                  <ScrollThumb $length="36px" />
                </ScrollTrack>
              </ScrollColumn>
            </TableArea>
          </Main>
        </Workspace>

        <BottomBar>
          <BottomTab $first>
            <TerminalIcon />
            Command Line
          </BottomTab>
          <BottomTab $active><TableIcon kind="node" />Node Table</BottomTab>
          <BottomTab><TableIcon kind="edge" />Edge Table</BottomTab>
          <BottomTab><TableIcon kind="network" />Network Table</BottomTab>
        </BottomBar>

        <Callout width="2127" height="700" viewBox="0 0 2127 700" fill="none" stroke={color.marker} strokeWidth="5">
          <circle cx="86.500" cy="119.500" r="23" />
          <path d="M109 124L1450 560" />
          <path d="M1475 568L1452 549L1445 572Z" fill={color.marker} stroke="none" />
          <rect x="1474.500" y="567.500" width="613" height="87" />
        </Callout>
      </Window>
    </>
  );
}
